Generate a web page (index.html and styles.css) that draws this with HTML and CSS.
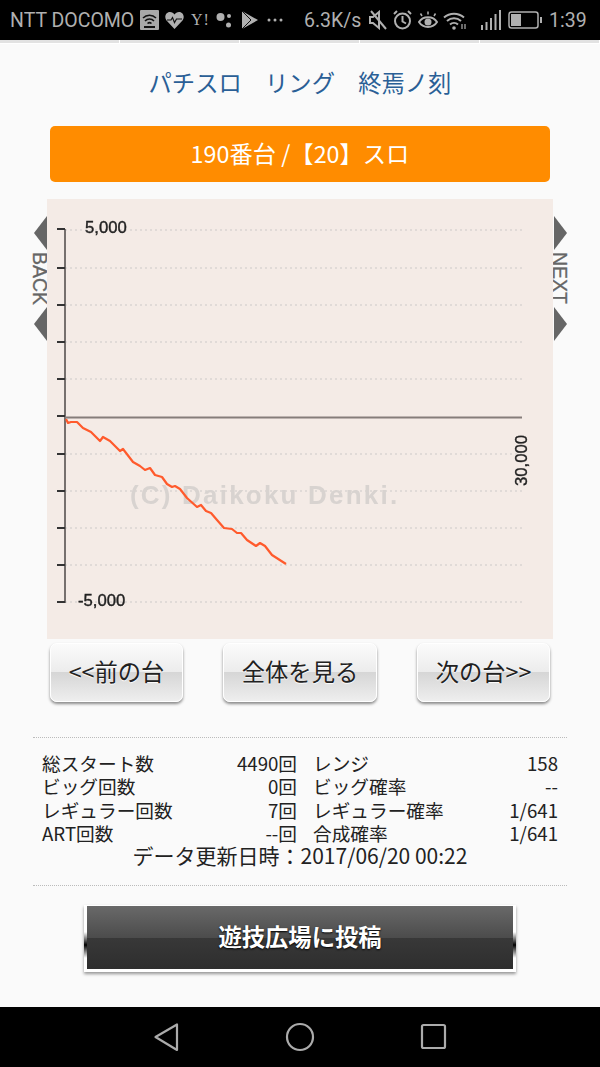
FILE: index.html
```html
<!DOCTYPE html>
<html lang="ja">
<head>
    <meta charset="UTF-8">
    <meta name="viewport" content="width=device-width, initial-scale=1.0">
    <title>パチスロ リング 終焉ノ刻</title>
    <link rel="stylesheet" href="styles.css">
</head>
<body>
    <div class="status-bar">
        <span class="carrier">NTT DOCOMO</span>
        <svg class="st-icon cast" viewBox="0 0 19 20"><rect width="19" height="20" rx="1" fill="#a8a8a8"/><path d="M3 8a9 9 0 0 1 13 0M5 11a6 6 0 0 1 9 0M7.500 13.500a3 3 0 0 1 4 0" fill="none" stroke="#111" stroke-width="1.500"/><rect x="4" y="16" width="11" height="2" fill="#111"/></svg>
        <svg class="st-icon heart" viewBox="0 0 19 18"><path d="M9.500 18L1.500 9.500C-1 6.500.5 1 5 1c2 0 3.500 1 4.500 2.500C10.500 2 12 1 14 1c4.500 0 6 5.500 3.500 8.500z" fill="#b0b0b0"/><path d="M2 9h4l1.500-2.500 2 5 2-3.500h5.500" fill="none" stroke="#111" stroke-width="1.200"/></svg>
        <span class="yahoo">Y!</span>
        <svg class="st-icon dots" viewBox="0 0 16 18"><circle cx="4.500" cy="6" r="4" fill="#b0b0b0"/><circle cx="13" cy="5" r="2" fill="#b0b0b0"/><circle cx="12.500" cy="14" r="2.500" fill="#b0b0b0"/></svg>
        <svg class="st-icon play" viewBox="0 0 16 18"><path d="M0 0l16 9-16 9z" fill="#b0b0b0"/><path d="M0 0l9 9-9 9" fill="none" stroke="#111" stroke-width="1"/></svg>
        <svg class="st-icon more" viewBox="0 0 16 4"><circle cx="2" cy="2" r="1.500" fill="#b0b0b0"/><circle cx="8" cy="2" r="1.500" fill="#b0b0b0"/><circle cx="14" cy="2" r="1.500" fill="#b0b0b0"/></svg>
        <span class="speed">6.3K/s</span>
        <svg class="st-icon mute" viewBox="0 0 18 20"><path d="M1 7v6h3l6 5V2L4 7z" fill="none" stroke="#b0b0b0" stroke-width="2"/><path d="M2 1l15 18" stroke="#b0b0b0" stroke-width="2"/></svg>
        <svg class="st-icon alarm" viewBox="0 0 19 20"><circle cx="9.500" cy="11" r="7.500" fill="none" stroke="#b0b0b0" stroke-width="2"/><path d="M9.500 6v5.500l3.500 2M1 4l3-3M18 4l-3-3" fill="none" stroke="#b0b0b0" stroke-width="2"/></svg>
        <svg class="st-icon eye" viewBox="0 0 20 19"><path d="M1 11c4-6.500 14-6.500 18 0-4 6.500-14 6.500-18 0z" fill="none" stroke="#b0b0b0" stroke-width="2"/><circle cx="10" cy="11" r="3.500" fill="#b0b0b0"/><path d="M4 5L2.500 2.500M10 3.500V.5M16 5l1.500-2.500" stroke="#b0b0b0" stroke-width="1.500"/></svg>
        <svg class="st-icon wifi" viewBox="0 0 24 19"><path d="M1 6.500a15 15 0 0 1 20 0M4 10a10.500 10.500 0 0 1 14 0M7 13.500a6 6 0 0 1 8 0" fill="none" stroke="#b0b0b0" stroke-width="2"/><circle cx="11" cy="17" r="1.800" fill="#b0b0b0"/><path d="M19 13v5M22 13v5" stroke="#b0b0b0" stroke-width="1.200"/></svg>
        <svg class="st-icon signal" viewBox="0 0 21 20"><path d="M1 15h2v5H1zM5.500 12h2v8h-2zM10 8h2v12h-2zM14.500 4h2v16h-2zM19 0h2v20h-2z" fill="#b0b0b0"/></svg>
        <svg class="st-icon battery" viewBox="0 0 35 18"><rect x="1" y="1" width="29" height="16" rx="2.500" fill="none" stroke="#b0b0b0" stroke-width="1.500"/><rect x="3" y="3" width="10" height="12" fill="#b0b0b0"/><rect x="32" y="6" width="2" height="6" fill="#b0b0b0"/></svg>
        <span class="clock">1:39</span>
    </div>

    <div class="tab-strip">
        <span></span><span></span><span></span><span></span><span></span>
    </div>

    <div class="page">
        <h1 class="title">パチスロ　リング　終焉ノ刻</h1>
        <div class="machine-bar">190番台 /【20】スロ</div>

        <div class="chart-row">
            <div class="side side-back">
                <span class="arrow arrow-left"></span>
                <span class="side-label">BACK</span>
                <span class="arrow arrow-left"></span>
            </div>

            <svg class="chart" width="506" height="440" viewBox="47 199 506 440">
                <g class="grid">
                    <path d="M65 230H522M65 268H522M65 305H522M65 342H522M65 379H522M65 454H522M65 491H522M65 528H522M65 565H522M65 602H522"/>
                </g>
                <text class="watermark" x="130" y="504">(C) Daikoku Denki.</text>
                <path class="axis" d="M65 229V603"/>
                <path class="ticks" d="M57 229H65M57 268H65M57 305H65M57 342H65M57 379H65M57 416H65M57 454H65M57 491H65M57 528H65M57 565H65M57 602H65"/>
                <path class="zero" d="M65 417.500H522"/>
                <text class="label" x="85" y="233">5,000</text>
                <text class="label" x="78" y="606">-5,000</text>
                <text class="label" transform="translate(527 486) rotate(-90)">30,000</text>
                <polyline class="line" points="66,419 68,423 71,422 77,422 83,428 91,432 100,441 103,437 110,441 120,451 123,449 133,462 140,466 145,470 150,468 155,475 162,477 167,484 172,487 175,486 180,489 187,498 197,507 201,505 206,511 211,513 217,520 224,528 232,529 237,533 241,533 247,540 256,546 260,543 265,546 272,555 286,564"/>
            </svg>

            <div class="side side-next">
                <span class="arrow arrow-right"></span>
                <span class="side-label">NEXT</span>
                <span class="arrow arrow-right"></span>
            </div>
        </div>

        <div class="nav-buttons">
            <button class="btn btn-side">&lt;&lt;前の台</button>
            <button class="btn btn-mid">全体を見る</button>
            <button class="btn btn-side">次の台&gt;&gt;</button>
        </div>

        <div class="stats">
            <div class="stats-grid">
                <span>総スタート数</span><span class="val">4490回</span><span class="label2">レンジ</span><span class="val">158</span>
                <span>ビッグ回数</span><span class="val">0回</span><span class="label2">ビッグ確率</span><span class="val">--</span>
                <span>レギュラー回数</span><span class="val">7回</span><span class="label2">レギュラー確率</span><span class="val">1/641</span>
                <span>ART回数</span><span class="val">--回</span><span class="label2">合成確率</span><span class="val">1/641</span>
            </div>
            <div class="updated">データ更新日時：2017/06/20 00:22</div>
        </div>

        <div class="post-wrap">
            <button class="post-btn">遊技広場に投稿</button>
        </div>
    </div>

    <div class="nav-bar">
        <svg width="600" height="60" viewBox="0 0 600 60">
            <path d="M155.500 30L177 17.500V43z" />
            <circle cx="300" cy="30" r="13"/>
            <rect x="422" y="18" width="23" height="23" rx="1.500"/>
        </svg>
    </div>
</body>
</html>
```

FILE: styles.css
```css
body {
    margin: 0;
    width: 600px;
    height: 1067px;
    overflow: hidden;
    display: flex;
    flex-direction: column;
    background: #fafafa;
    font-family: "Noto Sans CJK JP", "Noto Sans", sans-serif;
    color: #222;
}

/* status bar */
.status-bar {
    height: 40px;
    background: #000;
    color: #b0b0b0;
    display: flex;
    align-items: center;
    font-family: Roboto, sans-serif;
    font-size: 19.500px;
    padding-left: 10px;
    white-space: nowrap;
}
.carrier {
    width: 130px;
}
.st-icon {
    flex: none;
    display: block;
}
.cast { width: 19px; height: 20px; }
.heart { width: 19px; height: 18px; margin-left: 6px; }
.yahoo {
    width: 19px;
    margin-left: 7px;
    font-family: "Liberation Serif", serif;
    font-size: 16px;
    letter-spacing: 1px;
}
.dots { width: 16px; height: 18px; margin-left: 6px; }
.play { width: 16px; height: 18px; margin-left: 10px; }
.more { width: 16px; height: 4px; margin-left: 9px; }
.speed { width: 58px; margin-left: 21px; }
.mute { width: 18px; height: 20px; margin-left: 7px; }
.alarm { width: 19px; height: 20px; margin-left: 6px; }
.eye { width: 20px; height: 19px; margin-left: 6px; }
.wifi { width: 24px; height: 19px; margin-left: 5px; }
.signal { width: 21px; height: 20px; margin-left: 13px; }
.battery { width: 35px; height: 18px; margin-left: 7px; }
.clock { margin-left: 6px; }

.tab-strip {
    height: 4px;
    display: flex;
    background: #fff;
}
.tab-strip span {
    flex: 1;
    height: 3px;
    background: #e2e2e2;
    border-right: 1px solid #fff;
}

.page {
    flex: 1;
    display: flex;
    flex-direction: column;
}
.title {
    margin: 0;
    height: 82px;
    line-height: 77px;
    text-align: center;
    font-size: 23.300px;
    font-weight: normal;
    color: #2a5f96;
}
.machine-bar {
    margin: 0 50px;
    height: 56px;
    line-height: 54px;
    background: #ff8c00;
    border-radius: 5px;
    color: #fff;
    font-size: 23.300px;
    text-align: center;
}

/* chart */
.chart-row {
    margin-top: 17px;
    padding: 0 33px;
    display: flex;
}
.chart {
    display: block;
    flex: none;
    background: #f4ebe6;
    filter: blur(0.4px);
}
.side {
    width: 14px;
    padding-top: 17px;
    display: flex;
    flex-direction: column;
    align-items: center;
    color: #666;
}
.side-label {
    writing-mode: vertical-rl;
    font-family: "Liberation Sans", sans-serif;
    font-size: 19.500px;
    -webkit-text-stroke: 0.3px #666;
    line-height: 14px;
    height: 57px;
    text-align: center;
}
.arrow {
    width: 0;
    height: 0;
    border-top: 17px solid transparent;
    border-bottom: 17px solid transparent;
}
.arrow-left {
    border-right: 13px solid #666;
}
.arrow-right {
    border-left: 13px solid #666;
}
.grid path {
    fill: none;
    stroke: #d9d5d2;
    stroke-width: 1.500;
    stroke-dasharray: 2 3;
}
.axis, .ticks, .zero {
    fill: none;
    stroke-width: 2;
}
.axis { stroke: #76706e; }
.ticks { stroke: #333; }
.zero { stroke: #857d7a; }
.label {
    font-family: "Liberation Sans", sans-serif;
    font-size: 16.700px;
    fill: #222;
    stroke: #222;
    stroke-width: 0.400;
}
.watermark {
    font-family: "Liberation Sans", sans-serif;
    font-size: 26px;
    font-weight: bold;
    fill: #d8d3d0;
    letter-spacing: 2.200px;
}
.line {
    fill: none;
    stroke: #ff5a2c;
    stroke-width: 2.200;
    stroke-linejoin: round;
}

/* buttons */
.nav-buttons {
    margin-top: 4px;
    padding: 0 50px;
    display: flex;
    gap: 40px;
}
.btn {
    height: 59px;
    padding: 0 0 4px;
    border: 1px solid #fff;
    border-radius: 7px;
    background: linear-gradient(#fbfbfb 0%, #ececec 49%, #d6d6d6 50%, #eeeeee 100%);
    box-shadow: 0 2px 3px rgba(0, 0, 0, 0.45);
    font-family: "Noto Sans CJK JP", sans-serif;
    font-size: 23.300px;
    color: #222;
    text-shadow: 0 1px 1px #fff;
}
.btn-side { width: 133px; }
.btn-mid { width: 154px; }

/* stats */
.stats {
    margin: 35px 33px 0;
    padding: 13px 9px 16px;
    border-top: 1px dotted #bbb;
    border-bottom: 1px dotted #bbb;
    font-size: 18.670px;
    height: 149px;
    box-sizing: border-box;
}
.stats-grid {
    display: grid;
    grid-template-columns: 160px 95px 157px 104px;
    grid-auto-rows: 23.400px;
    line-height: 23.400px;
}
.val {
    text-align: right;
    white-space: nowrap;
}
.label2 {
    padding-left: 16px;
    white-space: nowrap;
}
.updated {
    margin-top: -3px;
    text-align: center;
    font-size: 21px;
    line-height: 26px;
}

.post-wrap {
    margin-top: 19px;
    display: flex;
    justify-content: center;
}
.post-btn {
    position: relative;
    width: 432px;
    height: 67px;
    padding: 0 0 3px;
    border: solid #fff;
    border-width: 1px 3px 3px;
    background: linear-gradient(#696969 0%, #4c4c4c 50%, #383838 51%, #2e2e2e 100%);
    box-shadow: 0 2px 3px rgba(0, 0, 0, 0.4);
    font-family: "Noto Sans CJK JP", sans-serif;
    font-size: 23.300px;
    font-weight: bold;
    color: #fff;
    text-shadow: 0 1px 2px #000;
}
.post-btn::before, .post-btn::after {
    content: "";
    position: absolute;
    top: 26px;
    width: 3px;
    height: 26px;
    background: linear-gradient(rgba(0, 0, 0, 0), #000 50%, rgba(0, 0, 0, 0));
}
.post-btn::before { left: -3px; }
.post-btn::after { right: -3px; }

.nav-bar {
    height: 60px;
    background: #000;
}
.nav-bar svg {
    display: block;
}
.nav-bar path, .nav-bar circle, .nav-bar rect {
    fill: none;
    stroke: #ababab;
    stroke-width: 2.200;
    stroke-linejoin: round;
}
```
